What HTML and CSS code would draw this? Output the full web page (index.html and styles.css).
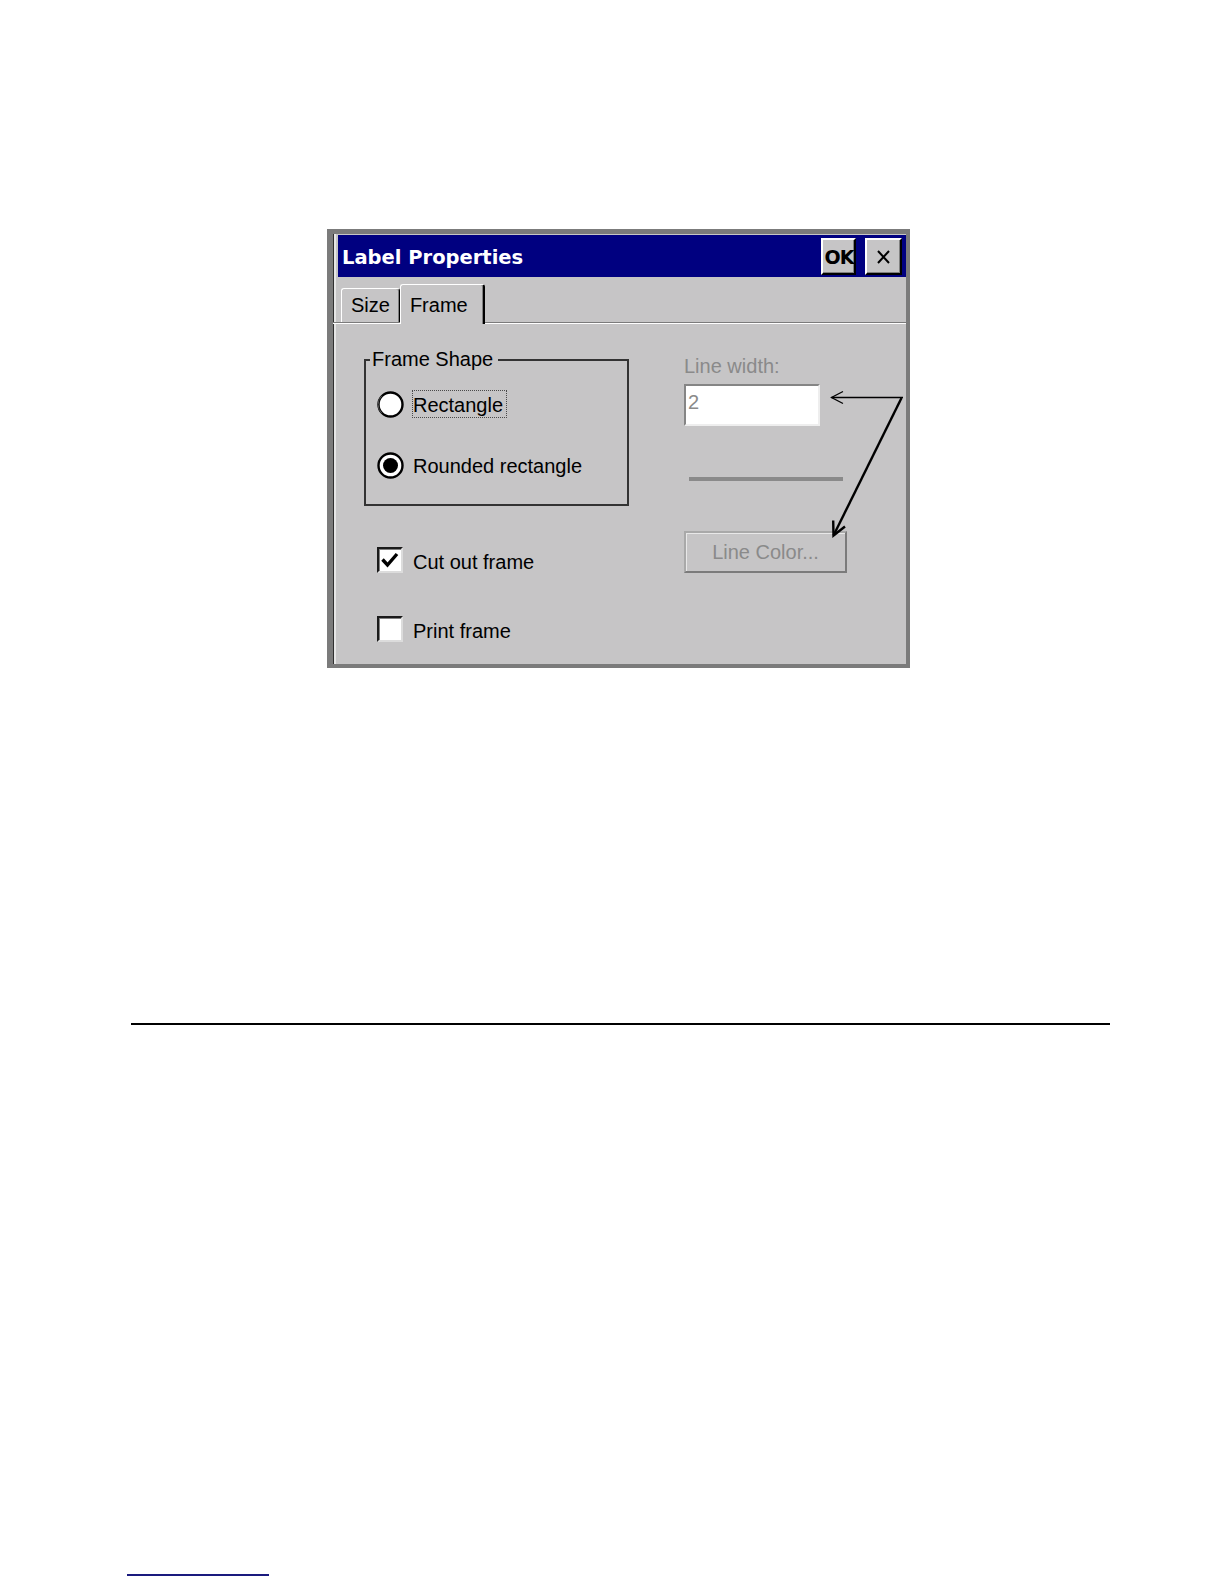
FILE: index.html
```html
<!DOCTYPE html>
<html>
<head>
<meta charset="utf-8">
<title>Label Properties</title>
<link rel="stylesheet" href="styles.css">
</head>
<body>
<div class="page">
  <div class="dialog">
    <div class="titlebar">
      <span class="title">Label Properties</span>
      <div class="tbtns">
        <div class="tbtn ok">OK</div>
        <div class="tbtn close">
          <svg width="13" height="14" viewBox="0 0 13 14"><path d="M1 1 L12 13 M12 1 L1 13" stroke="#000" stroke-width="2" fill="none"/></svg>
        </div>
      </div>
    </div>
    <div class="tabs">
      <div class="tab">Size</div>
      <div class="tab active">Frame</div>
    </div>
    <div class="panel">
      <div class="lcol">
        <fieldset class="group">
          <legend>Frame Shape</legend>
          <div class="opts">
            <div class="radio-row">
              <svg class="radio" width="27" height="27" viewBox="0 0 27 27"><circle cx="13.5" cy="13.5" r="12" fill="#fff" stroke="#000" stroke-width="2.4"/><path d="M4.8 22.2 A12 12 0 0 1 4.8 4.8" stroke="#555" stroke-width="1" fill="none"/></svg>
              <span class="lbl focus">Rectangle</span>
            </div>
            <div class="radio-row">
              <svg class="radio" width="27" height="27" viewBox="0 0 27 27"><circle cx="13.5" cy="13.5" r="12" fill="#fff" stroke="#000" stroke-width="2.4"/><circle cx="13.5" cy="13.5" r="7.5" fill="#000"/></svg>
              <span class="lbl">Rounded rectangle</span>
            </div>
          </div>
        </fieldset>
        <div class="check-row first">
          <div class="cbox"><svg width="22" height="22" viewBox="0 0 22 22"><path d="M3.5 10.5 L8.5 16 L18 5" stroke="#000" stroke-width="3.4" fill="none"/></svg></div>
          <span class="clbl">Cut out frame</span>
        </div>
        <div class="check-row">
          <div class="cbox"></div>
          <span class="clbl">Print frame</span>
        </div>
      </div>
      <div class="rcol">
        <div class="dim-label">Line width:</div>
        <div class="input">2</div>
        <div class="sample-line"></div>
        <div class="btn">Line Color...</div>
      </div>
    </div>
  </div>
  <div class="hr"></div>
  <div class="link-line"></div>
</div>
<svg class="annot" width="1224" height="700" viewBox="0 0 1224 700">
  <line x1="903" y1="397.5" x2="831.5" y2="397.5" stroke="#000" stroke-width="1.3"/>
  <polyline points="843,391.5 831.5,397.5 843,403.5" stroke="#000" stroke-width="1.3" fill="none"/>
  <line x1="901.5" y1="398" x2="833.5" y2="535.5" stroke="#000" stroke-width="2.4"/>
  <polyline points="833.2,520.5 833.5,535.5 845,526.5" stroke="#000" stroke-width="2.4" fill="none"/>
</svg>
</body>
</html>
```

FILE: styles.css
```css
html, body {
  margin: 0;
  padding: 0;
  background: #ffffff;
}

body {
  position: relative;
  width: 1224px;
  height: 1584px;
  overflow: hidden;
  font-family: "Liberation Sans", Arial, sans-serif;
  font-size: 20px;
  color: #000;
}

.page {
  padding-top: 229px;
}

.dialog {
  margin-left: 327px;
  width: 583px;
  height: 439px;
  box-sizing: border-box;
  border-style: solid;
  border-color: #7b7b7b;
  border-width: 5px 4px 4px 6px;
  background: #c6c5c6;
  box-shadow: inset 1px 0 0 #303030, inset 3px 0 0 #e6e6e6;
  overflow: hidden;
}

.titlebar {
  margin: 1px 0 0 5px;
  height: 42px;
  background: #000080;
  display: flex;
  align-items: center;
  justify-content: space-between;
  padding: 0 4px 0 4px;
}

.title {
  font-family: "DejaVu Sans", sans-serif;
  font-weight: bold;
  font-size: 19.5px;
  line-height: 23px;
  padding-top: 3px;
  color: #ffffff;
}

.tbtns {
  display: flex;
  gap: 9px;
}

.tbtn {
  height: 37px;
  box-sizing: border-box;
  background: #c6c5c6;
  border: 2px solid;
  border-color: #ffffff #000000 #000000 #ffffff;
  box-shadow: inset -1px -1px 0 #808080;
  display: flex;
  align-items: center;
  justify-content: center;
}

.tbtn.ok {
  width: 35px;
  font-family: "DejaVu Sans", sans-serif;
  font-weight: bold;
  font-size: 19px;
  letter-spacing: -1px;
  line-height: 1;
  padding: 2px 0 0 1px;
  transform-origin: center;
}

.tbtn.close {
  width: 37px;
  padding-top: 2px;
}

.tabs {
  display: flex;
  align-items: flex-end;
  height: 45px;
  padding-left: 8px;
  border-bottom: 1px solid #7b7b7b;
  box-shadow: 0 1px 0 #ffffff;
}

.tab {
  box-sizing: border-box;
  height: 34px;
  padding: 5px 9px 0 9px;
  line-height: 23px;
  border-top: 1px solid #ffffff;
  border-left: 1px solid #ffffff;
  border-right: 1px solid #000000;
  box-shadow: inset -1px 0 0 #808080;
  border-radius: 3px 3px 0 0;
  background: #c6c5c6;
}

.tab.active {
  height: 40px;
  margin-bottom: -2px;
  padding: 9px 15px 0 9px;
  border-right-width: 2px;
}

.panel {
  display: grid;
  grid-template-columns: 265px 163px;
  column-gap: 55px;
  align-items: start;
  padding: 25px 0 0 31px;
}

.lcol {
  display: flex;
  flex-direction: column;
}

.group {
  margin: 0;
  padding: 0;
  min-width: 0;
  border: 2px solid #333333;
}

.group legend {
  margin-left: 4px;
  padding: 0 5px 0 2px;
  line-height: 23px;
}

.opts {
  display: flex;
  flex-direction: column;
  gap: 33px;
  padding: 19px 0 25px 11px;
}

.radio-row {
  display: flex;
  align-items: center;
  gap: 8px;
  height: 28px;
}

.radio {
  display: block;
  flex: none;
}

.lbl {
  display: inline-block;
  line-height: 23px;
  padding: 3px 3px 0 0;
  border: 1px dotted transparent;
}

.lbl.focus {
  border-color: #4a4a4a;
}

.check-row {
  display: flex;
  align-items: center;
  gap: 10px;
  margin-left: 13px;
  margin-top: 41px;
}

.check-row.first {
  margin-top: 40px;
}

.cbox {
  width: 26px;
  height: 26px;
  box-sizing: border-box;
  background: #ffffff;
  border: 2px solid;
  border-color: #1a1a1a #dcdcdc #dcdcdc #1a1a1a;
  box-shadow: inset 1px 1px 0 #808080;
  display: flex;
  align-items: center;
  justify-content: center;
  flex: none;
}

.clbl {
  line-height: 23px;
  padding-top: 5px;
}

.rcol {
  display: flex;
  flex-direction: column;
  align-items: flex-start;
  padding-top: 7px;
}

.dim-label {
  color: #8a8a8a;
  line-height: 23px;
}

.input {
  margin-top: 6px;
  width: 136px;
  height: 42px;
  box-sizing: border-box;
  border: 2px solid;
  border-color: #858585 #eeeeee #eeeeee #858585;
  background: #ffffff;
  padding: 5px 0 0 2px;
  color: #8a8a8a;
  line-height: 23px;
}

.sample-line {
  margin-top: 51px;
  margin-left: 5px;
  width: 154px;
  height: 4px;
  background: #8a8a8a;
}

.btn {
  margin-top: 50px;
  width: 163px;
  height: 42px;
  box-sizing: border-box;
  border: 2px solid;
  border-color: #a9a9a9 #7b7b7b #7b7b7b #a9a9a9;
  box-shadow: inset 1px 1px 0 #e8e8e8;
  color: #8a8a8a;
  display: flex;
  align-items: center;
  justify-content: center;
  line-height: 23px;
  padding-top: 1px;
}

.hr {
  margin: 355px 0 0 131px;
  width: 979px;
  height: 2px;
  background: #000000;
}

.link-line {
  margin: 549px 0 0 127px;
  width: 142px;
  height: 2px;
  background: #1a1a7e;
}

.annot {
  position: absolute;
  left: 0;
  top: 0;
  pointer-events: none;
}
```
